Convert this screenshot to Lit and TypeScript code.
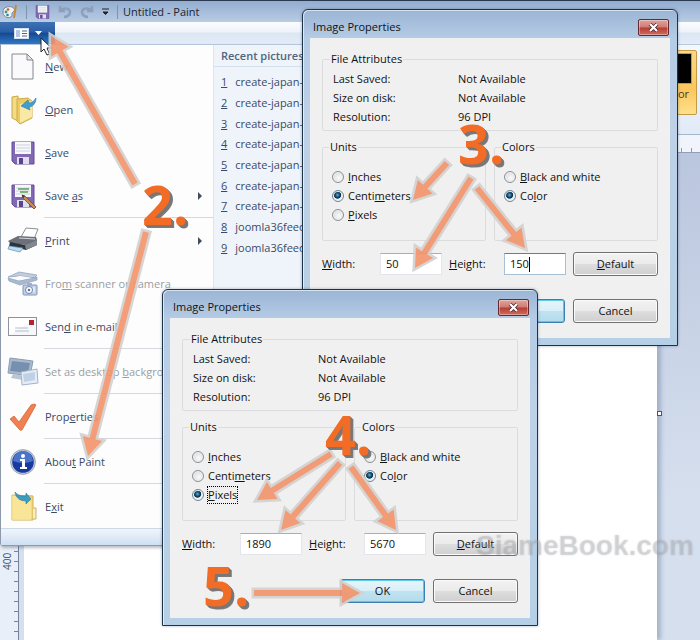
import { LitElement, html, svg, css, nothing } from "lit";
import { customElement, property } from "lit/decorators.js";
import { classMap } from "lit/directives/class-map.js";

/** Renders a label whose access key is marked by a leading ampersand. */
const accessKey = (label: string) => {
  const at = label.indexOf("&");
  if (at < 0) return html`${label}`;
  return html`${label.slice(0, at)}<u>${label[at + 1]}</u>${label.slice(at + 2)}`;
};

const floppy = svg`
  <path d="M1 1H23V23H4L1 20Z" fill="#8369b4" stroke="#634d98" />
  <rect x="4" y="1" width="16" height="12" fill="#f7f8fb" />
  <path d="M5 4H19M5 7H19M5 10H19" stroke="#ccd2dc" />
  <rect x="6" y="16" width="12" height="7" fill="#dfe1ea" />
  <rect x="8" y="17" width="4" height="6" fill="#5a4390" />`;

const icons: Record<string, { height: number; art: unknown; wide?: boolean }> = {
  new: {
    height: 27,
    art: svg`
      <path d="M1 1H16L22 7V26H1Z" fill="#fafafc" stroke="#85888f" />
      <path d="M16 1V7H22Z" fill="#e6e8ec" stroke="#85888f" />`,
  },
  open: {
    height: 28,
    art: svg`
      <path d="M1 1L7 0V25L1 22Z" fill="#f3dc85" stroke="#c9a548" />
      <path d="M6 3L17 2L21 5V22L9 28L6 25Z" fill="#eccb62" stroke="#d0aa45" />
      <path d="M9 8V27L21 21V5Z" fill="#f9e9a6" />
      <path d="M25 2C25 8 21 11 18 11L19 14L10 10L17 4L18 7C21 7 23 5 25 2Z" fill="#3f9fce" stroke="#2a7aa8" stroke-width=".6" />`,
  },
  save: { height: 24, art: floppy },
  saveas: {
    height: 24,
    art: svg`${floppy}
      <path d="M7 5H18M9 8H17" stroke="#55a055" stroke-width="1.4" />
      <path d="M11 11L14 12L25 23L23 25L12 14Z" fill="#c98a52" stroke="#74492a" stroke-width=".8" />
      <path d="M11 11L14 12L12 14Z" fill="#333" />`,
  },
  print: {
    height: 25,
    wide: true,
    art: svg`
      <path d="M13 9L18 0L30 1L26 11Z" fill="#fff" stroke="#8a8f98" />
      <path d="M0 13L10 8L28 9L29 12L18 17L2 15Z" fill="#6b7079" />
      <path d="M2 14L17 17L29 12V17L18 22L1 18Z" fill="#2f343c" />
      <path d="M17 17L29 12V17L18 22Z" fill="#81868f" />
      <path d="M1 18L15 20L12 24L0 21Z" fill="#b8dcf2" stroke="#5c8fb4" stroke-width=".7" />
      <path d="M11 10L27 11" stroke="#d5d8dd" stroke-width="1.200" />`,
  },
  scanner: {
    height: 24,
    wide: true,
    art: svg`
      <path d="M0 5L11 0L29 3L26 6L12 4Z" fill="#c1cddd" stroke="#8b9db8" stroke-width=".7" />
      <path d="M0 6L11 9L29 5V8L12 13L1 9Z" fill="#a9bad0" stroke="#8b9db8" stroke-width=".7" />
      <path d="M4 6L12 4L24 6L12 8Z" fill="#fafcff" />
      <rect x="15" y="13" width="14" height="10" rx="1" fill="#c3d1e6" stroke="#8296b8" />
      <rect x="19" y="11" width="5" height="3" fill="#9fb0ca" />
      <circle cx="21" cy="18" r="3.500" fill="#fff" stroke="#6e84ac" />
      <circle cx="21" cy="18" r="1.300" fill="#5b73a1" />
      <path d="M26 15V20" stroke="#fff" />`,
  },
  mail: {
    height: 19,
    wide: true,
    art: svg`
      <rect x=".5" y=".5" width="28" height="18" fill="#fff" stroke="#8d929b" />
      <path d="M1 18L28 1V18Z" fill="#f5f7fa" />
      <rect x="21" y="3" width="5" height="5" fill="#b1242c" />
      <path d="M7 11H20M7 14H21" stroke="#b7becb" />`,
  },
  desktop: {
    height: 27,
    wide: true,
    art: svg`
      <path d="M2 0L25 3L22 18L0 15Z" fill="#aab9cd" stroke="#8a9cb6" />
      <path d="M4 3L22 5L20 15L2 13Z" fill="#7890b0" />
      <path d="M5 16L17 18L15 22L3 20Z" fill="#b9c6d6" />
      <path d="M13 14L29 11L30 25L14 27Z" fill="#e4ecf5" stroke="#a4b4cb" />
      <path d="M15 16L27 14V22L16 24Z" fill="#c1d1e5" />`,
  },
  check: {
    height: 28,
    art: svg`
      <path d="M-1 16L3 13L8 19L20 2Q24 0 25 2L11 27Q9 28 8 26Z" fill="#f08050" stroke="#cf5c33" stroke-width=".7" />`,
  },
  about: {
    height: 26,
    art: svg`
      <circle cx="12" cy="13" r="12.400" fill="#c5cbd6" stroke="#8d96a6" stroke-width=".8" />
      <circle cx="12" cy="13" r="10.800" fill="#173a9e" />
      <path d="M2 12A10 10 0 0 1 22 12Q12 16 2 12Z" fill="#4a74cc" />
      <circle cx="12" cy="7" r="2" fill="#fff" />
      <path d="M9 10H14V18H16V20H9V18H11V12H9Z" fill="#fff" />`,
  },
  exit: {
    height: 29,
    art: svg`
      <path d="M1 3L22 4V28H1Z" fill="#f3da7c" stroke="#d2b052" />
      <path d="M1 3L20 10V28H1Z" fill="#fae9a2" opacity=".7" />
      <path d="M22 16H25V27H22" fill="#f8eebf" stroke="#c7b274" />
      <path d="M4 0C7 4 11 4 15 4V1L20 7L15 12V9C9 9 5 6 4 0Z" fill="#3d9cc0" stroke="#2b7898" stroke-width=".6" />`,
  },
};

interface Command {
  icon: string;
  label: string;
  disabled?: boolean;
  submenu?: boolean;
  ruled?: boolean;
}

const commands: Command[] = [
  { icon: "new", label: "&New" },
  { icon: "open", label: "&Open" },
  { icon: "save", label: "&Save" },
  { icon: "saveas", label: "Save &as", submenu: true, ruled: true },
  { icon: "print", label: "&Print", submenu: true },
  { icon: "scanner", label: "Fro&m scanner or camera", disabled: true },
  { icon: "mail", label: "Sen&d in e-mail", ruled: true },
  { icon: "desktop", label: "Set as desktop &background", disabled: true, ruled: true },
  { icon: "check", label: "Prop&erties", ruled: true },
  { icon: "about", label: "Abou&t Paint", ruled: true },
  { icon: "exit", label: "E&xit" },
];

const recent = [
  ...Array.from({ length: 7 }, () => "create-japan-"),
  "joomla36feed",
  "joomla36feed",
];

@customElement("paint-menu")
class PaintMenu extends LitElement {
  static styles = css`
    :host {
      display: flex;
      flex-direction: column;
      box-sizing: border-box;
      border: 1px solid #8e9aab;
      border-top-color: #b4c6de;
      border-radius: 0 0 3px 3px;
      background: #fdfdfe;
      color: #3a4a66;
      box-shadow: 1px 2px 3px rgba(60, 70, 90, 0.35);
    }
    .panes { display: flex; }
    .commands { width: 212px; }
    .item {
      display: flex;
      align-items: center;
      width: 100%;
      height: 43px;
      padding: 0 11px 0 6px;
      border: 0;
      background: none;
      color: inherit;
      font: inherit;
      text-align: left;
      white-space: nowrap;
    }
    .item:disabled { color: #9a9da3; }
    .icon { width: 38px; flex: none; display: flex; }
    .icon svg { display: block; margin-left: 4px; overflow: visible; }
    .wide svg { margin-left: 1px; }
    .label { flex: 1; }
    .rule { height: 1px; margin: 0 0 1px 43px; background: #d5d8dc; }
    .recent {
      flex: 1;
      border-left: 1px solid #dde4ee;
      background: #eff4fb;
      overflow: hidden;
    }
    .heading {
      margin: 0 0 5px;
      padding-left: 7px;
      height: 21px;
      line-height: 21px;
      border-bottom: 1px solid #d4dfee;
      color: #50657f;
      font-size: 11px;
      font-weight: 600;
    }
    .list {
      display: grid;
      grid-auto-rows: 1fr;
      align-items: center;
      height: 186px;
      margin: 0;
      padding: 0 0 0 7px;
      list-style: none;
    }
    .list a { display: flex; gap: 8px; color: inherit; text-decoration: none; }
    .footer {
      height: 16px;
      border-top: 1px solid #cdd8e6;
      background: linear-gradient(#f0f5fc, #cfe0f3);
    }
  `;

  render() {
    return html`
      <div class="panes">
        <div class="commands">
          ${commands.map((c) => {
            const { height, art, wide } = icons[c.icon];
            return html`
              <button class="item" ?disabled=${!!c.disabled}>
                <span class=${classMap({ icon: true, wide: !!wide })}>
                  <svg width="28" height=${height} aria-hidden="true">${art}</svg>
                </span>
                <span class="label">${accessKey(c.label)}</span>
                ${c.submenu
                  ? html`<svg width="4" height="8" aria-hidden="true"><path d="M0 0L4 4L0 8Z" fill="#444c58" /></svg>`
                  : nothing}
              </button>
              ${c.ruled ? html`<div class="rule"></div>` : nothing}
            `;
          })}
        </div>
        <div class="recent">
          <h2 class="heading">Recent pictures</h2>
          <ul class="list">
            ${recent.map((name, i) => html`<li><a href="#"><u>${i + 1}</u>${name}</a></li>`)}
          </ul>
        </div>
      </div>
      <div class="footer"></div>
    `;
  }
}

@customElement("image-properties")
class ImageProperties extends LitElement {
  @property() unit = "Pixels";
  @property() imageWidth = "";
  @property() imageHeight = "";
  @property({ type: Boolean }) focusRing = false;
  @property({ type: Boolean }) caret = false;

  static styles = css`
    :host {
      box-sizing: border-box;
      border: 1px solid #1d3347;
      border-radius: 6px 6px 0 0;
      background: linear-gradient(#9bb5d5, #b4cbe5 28px, #bdd1e8 120px, #b5d0e6);
      box-shadow: inset 1px 1px 0 rgba(255, 255, 255, 0.6), 0 0 3px rgba(30, 50, 80, 0.4);
      padding: 0 7px 7px;
      color: #111;
    }
    .title {
      display: flex;
      align-items: center;
      justify-content: space-between;
      height: 28px;
      padding-left: 3px;
    }
    .name { margin: 0; padding-top: 6px; font-size: 11px; font-weight: 400; }
    .close {
      display: grid;
      place-items: center;
      width: 31px;
      height: 17px;
      margin-top: 6px;
      margin-right: 1px;
      padding: 0;
      border: 1px solid #642a30;
      border-radius: 2px;
      background: linear-gradient(#dfa49d, #cf7b72 48%, #b53c33 52%, #cd6d60);
      box-shadow: inset 0 0 0 1px rgba(255, 255, 255, 0.35);
    }
    .client {
      min-height: 300px;
      box-sizing: border-box;
      padding: 13px 12px 14px;
      background: #f0f0f0;
    }
    fieldset {
      box-sizing: border-box;
      min-width: 0;
      margin: 0;
      padding: 2px 10px 4px;
      border: 1px solid #dadcde;
      border-radius: 2px;
    }
    legend { margin-left: -3px; padding: 0 1px; line-height: 16px; }
    .facts {
      display: grid;
      grid-template-columns: 125px 1fr;
      grid-auto-rows: 19px;
      align-items: center;
      margin: 0;
    }
    dd { margin: 0; }
    .groups { display: grid; grid-template-columns: 1fr 1fr; gap: 8px; margin-top: 8px; }
    .options { padding: 12px 9px 16px; }
    .option { display: flex; align-items: center; gap: 4px; height: 19px; }
    input[type="radio"] {
      appearance: none;
      width: 12px;
      height: 12px;
      margin: 0;
      border: 1px solid #8b8f94;
      border-radius: 50%;
      background: radial-gradient(circle at 60% 60%, #fafafa, #cfd2d5);
      box-shadow: inset 0 0 0 1px #f2f2f2;
    }
    input[type="radio"]:checked {
      border-color: #6f8796;
      background: radial-gradient(circle at 45% 40%, #58b4de 0, #14486b 28%, #0b304c 40%, #e9f2f7 50%);
    }
    .ring { outline: 1px dotted #000; }
    .sizes {
      display: grid;
      grid-template-columns: 58px 62px 62px 62px 1fr;
      align-items: center;
      margin-top: 11px;
    }
    .second { padding-left: 7px; }
    .field {
      display: flex;
      align-items: center;
      height: 22px;
      box-sizing: border-box;
      padding-left: 5px;
      border: 1px solid #e3e5ea;
      border-top-color: #abadb3;
      background: #fff;
    }
    .field input {
      width: 100%;
      min-width: 0;
      padding: 0;
      border: 0;
      outline: 0;
      background: none;
      font: inherit;
      font-size: 11px;
      color: inherit;
    }
    .field.caret { border-color: #a9bfd3; border-top-color: #5f7f9c; }
    .caret input { width: 19px; border-right: 1px solid #000; height: 15px; }
    .button {
      height: 24px;
      width: 85px;
      padding: 0;
      border: 1px solid #707070;
      border-radius: 3px;
      background: linear-gradient(#f2f2f2, #ebebeb 48%, #dddddd 52%, #cfcfcf);
      box-shadow: inset 0 0 0 1px #fbfbfb;
      color: inherit;
      font: inherit;
    }
    .sizes .button { margin-left: 7px; }
    .primary {
      border-color: #3c7fb1;
      background: linear-gradient(#e8f5fb, #d9eff8 48%, #c0e2f0 52%, #b2dcec);
      box-shadow: inset 0 0 0 1px #5cc9e8;
    }
    .actions { display: flex; justify-content: flex-end; gap: 8px; margin-top: 23px; }
  `;

  private radio(group: string, label: string, checked: boolean, ring = false) {
    return html`
      <label class="option">
        <input type="radio" name=${group} .checked=${checked} />
        <span class=${classMap({ ring })}>${accessKey(label)}</span>
      </label>`;
  }

  render() {
    const units = ["&Inches", "Centi&meters", "&Pixels"];
    return html`
      <div class="title">
        <h2 class="name">Image Properties</h2>
        <button class="close" aria-label="Close">
          <svg width="11" height="9" viewBox="0 0 11 9">
            <path d="M2 1L9 8M9 1L2 8" stroke="#4b2026" stroke-width="3.600" />
            <path d="M2 1L9 8M9 1L2 8" stroke="#fff" stroke-width="2.200" />
          </svg>
        </button>
      </div>
      <div class="client">
        <fieldset>
          <legend>File Attributes</legend>
          <dl class="facts">
            <dt>Last Saved:</dt><dd>Not Available</dd>
            <dt>Size on disk:</dt><dd>Not Available</dd>
            <dt>Resolution:</dt><dd>96 DPI</dd>
          </dl>
        </fieldset>
        <div class="groups">
          <fieldset class="options">
            <legend>Units</legend>
            ${units.map((u) => {
              const on = u.replace("&", "") === this.unit;
              return this.radio("units", u, on, on && this.focusRing);
            })}
          </fieldset>
          <fieldset class="options">
            <legend>Colors</legend>
            ${this.radio("colors", "&Black and white", false)}
            ${this.radio("colors", "Co&lor", true)}
          </fieldset>
        </div>
        <div class="sizes">
          <label for="w">${accessKey("&Width:")}</label>
          <span class="field"><input id="w" type="text" .value=${this.imageWidth} /></span>
          <label class="second" for="h">${accessKey("&Height:")}</label>
          <span class=${classMap({ field: true, caret: this.caret })}>
            <input id="h" type="text" .value=${this.imageHeight} />
          </span>
          <button class="button">${accessKey("&Default")}</button>
        </div>
        <div class="actions">
          <button class="button primary">OK</button>
          <button class="button">Cancel</button>
        </div>
      </div>
    `;
  }
}

/** Arrows of the walkthrough: tail x, tail y, tip x, tip y. */
const arrows = [
  [135, 184, 51, 36],
  [146, 232, 88, 456],
  [447, 163, 413, 200],
  [471, 178, 415, 268],
  [477, 188, 525, 248],
  [331, 454, 257, 500],
  [340, 463, 281, 530],
  [351, 467, 396, 530],
  [254, 593, 360, 593],
];

@customElement("app-root")
class AppRoot extends LitElement {
  static styles = css`
    :host {
      position: relative;
      display: flex;
      flex-direction: column;
      min-height: 100vh;
      overflow: hidden;
      background: #cdd7e9;
      font: 11px/16px "Open Sans", "Noto Sans", sans-serif;
      color: #222;
    }
    .titlebar {
      display: flex;
      align-items: center;
      height: 22px;
      box-sizing: border-box;
      padding-left: 2px;
      border-top: 1px solid #2a3850;
      background: linear-gradient(#93add0, #b9cce4);
    }
    .quick { display: flex; align-items: center; gap: 8px; }
    .tool { display: block; padding: 0; border: 0; background: none; line-height: 0; }
    .divider { width: 1px; height: 14px; background: #7d93b2; }
    .caption { margin: 0 0 0 5px; font-size: 11px; font-weight: 400; color: #1c2430; }
    .tabs {
      height: 22px;
      background: linear-gradient(#fbfcfe, #eef3fa 45%, #dde7f4 50%, #e2ebf7);
    }
    .file {
      display: flex;
      align-items: center;
      justify-content: center;
      gap: 6px;
      width: 55px;
      height: 22px;
      padding: 0;
      border: 0;
      background: linear-gradient(#3d72b4, #2a5ea6 45%, #154a93 52%, #2f78c4);
    }
    .ribbon {
      display: flex;
      justify-content: flex-end;
      height: 91px;
      box-sizing: border-box;
      padding: 5px 3px 0;
      border-top: 1px solid #b6c9e1;
      border-bottom: 1px solid #a5b6cd;
      background: linear-gradient(#f4f8fd, #e1eaf6);
    }
    .swatch {
      display: flex;
      flex-direction: column;
      align-items: flex-end;
      gap: 2px;
      width: 50px;
      height: 65px;
      padding: 2px 4px;
      border: 1px solid #c39a48;
      border-radius: 2px;
      background: linear-gradient(#fbd789, #fbc75c 60%, #ffe08c);
      color: #4b3a1e;
      font: inherit;
    }
    .chip { width: 28px; height: 29px; border: 1px solid #b39a68; background: #000; }
    .name { padding-right: 3px; }
    .ruler-top {
      height: 18px;
      border-bottom: 1px solid #8f9fb8;
      box-sizing: border-box;
      background:
        repeating-linear-gradient(90deg, transparent 0 1px, #8b9ab2 1px 2px, transparent 2px 10px) bottom / 100% 4px no-repeat,
        #f1f5fb;
    }
    .workspace {
      flex: 1;
      display: flex;
      gap: 5px;
      padding-right: 43px;
      background: linear-gradient(#bac6de, #d5dfee 70%);
    }
    .ruler {
      width: 19px;
      flex: none;
      height: 487px;
      overflow: hidden;
      box-sizing: border-box;
      border-right: 1px solid #75849c;
      background:
        repeating-linear-gradient(transparent 0 8px, #75849c 8px 9px, transparent 9px 10px) right / 4px 100% no-repeat,
        #e9eff8;
    }
    .mark {
      display: block;
      height: 100px;
      line-height: 14px;
      writing-mode: vertical-rl;
      transform: rotate(180deg);
      text-align: right;
      width: 14px;
      color: #444f60;
      font-size: 10px;
    }
    .canvas {
      position: relative;
      flex: 1;
      background: #fff;
      box-shadow: 4px 0 4px rgba(110, 130, 165, 0.45);
    }
    .handle {
      position: absolute;
      top: 258px;
      right: -5px;
      width: 3px;
      height: 3px;
      border: 1px solid #555;
      background: #fff;
    }
    paint-menu { position: absolute; top: 44px; left: 0; width: 440px; }
    image-properties { position: absolute; width: 376px; }
    .first { left: 302px; top: 9px; }
    .front { left: 162px; top: 289px; }
    .mark-up, .cursor { position: absolute; top: 0; left: 0; pointer-events: none; }
    .cursor { top: 37px; left: 40px; }
    .step {
      position: absolute;
      font: 700 54px/56px "Open Sans", sans-serif;
      color: #f26c25;
      text-shadow: 1px 1px 0 #777, 2px 2px 0 #777, 3px 3px 0 #7b7b7b;
    }
    .step2 { left: 142px; top: 176px; }
    .step3 { left: 458px; top: 115px; }
    .step4 { left: 325px; top: 406px; }
    .step5 { left: 203px; top: 557px; }
    .watermark {
      position: absolute;
      left: 476px;
      top: 530px;
      font: 700 28px/32px "Liberation Sans", Arial, sans-serif;
      color: rgba(165, 168, 174, 0.28);
      text-shadow: 0 0 2px rgba(130, 130, 135, 0.25);
    }
  `;

  private arrow([x1, y1, x2, y2]: number[]) {
    const length = Math.hypot(x2 - x1, y2 - y1);
    const angle = (Math.atan2(y2 - y1, x2 - x1) * 180) / Math.PI;
    const neck = length - 18;
    return svg`<path
      transform="translate(${x1} ${y1}) rotate(${angle})"
      d="M0 -3H${neck}V-10L${length} 0L${neck} 10V3H0Z"
      fill="#f3946a" stroke="#d3d1d0" stroke-width="5" paint-order="stroke" />`;
  }

  render() {
    return html`
      <header class="titlebar">
        <div class="quick">
          <svg width="16" height="16" viewBox="0 0 16 16" aria-hidden="true">
            <path d="M1 8C1 3 6 2 10 3C13 4 13 7 11 8C9 9 11 11 9 13C5 15 1 12 1 8Z" fill="#eef1f4" stroke="#76889c" />
            <circle cx="4" cy="8" r="1.400" fill="#3f9c54" /><circle cx="6" cy="5.500" r="1.300" fill="#d0573a" />
            <circle cx="5.500" cy="11" r="1.300" fill="#3d76c2" /><path d="M14 1L12 14" stroke="#c68a3b" stroke-width="2" />
          </svg>
          <span class="divider"></span>
          <button class="tool" aria-label="Save"><svg width="15" height="14" viewBox="0 0 24 24">${floppy}</svg></button>
          <button class="tool" aria-label="Undo"><svg width="14" height="14" viewBox="0 0 14 14">
            <path d="M2 1V6H7M2 6C5 2 12 3 12 7C12 10 9 12 6 12" fill="none" stroke="#8da0bb" stroke-width="2.600" /></svg></button>
          <button class="tool" aria-label="Redo"><svg width="14" height="14" viewBox="0 0 14 14">
            <path d="M12 1V6H7M12 6C9 2 2 3 2 7C2 10 5 12 8 12" fill="none" stroke="#8da0bb" stroke-width="2.600" /></svg></button>
          <button class="tool" aria-label="Customize"><svg width="7" height="8" viewBox="0 0 7 8">
            <path d="M0 1H7M1 4H6L3.500 6.500Z" fill="#222" stroke="#222" /></svg></button>
          <span class="divider"></span>
        </div>
        <h1 class="caption">Untitled - Paint</h1>
      </header>
      <nav class="tabs">
        <button class="file" aria-label="Paint menu">
          <svg width="15" height="11" viewBox="0 0 15 11">
            <rect x=".5" y=".5" width="14" height="10" fill="#fff" stroke="#d5e0ef" />
            <rect x="2" y="2" width="4" height="7" fill="#b5c9e2" />
            <path d="M8 3H13M8 5.500H13M8 8H13" stroke="#47688f" />
          </svg>
          <svg width="7" height="4"><path d="M0 0H7L3.500 4Z" fill="#fff" /></svg>
        </button>
      </nav>
      <section class="ribbon">
        <button class="swatch"><span class="chip"></span><span class="name">Color</span></button>
      </section>
      <div class="ruler-top"></div>
      <main class="workspace">
        <div class="ruler">
          ${[0, 100, 200, 300, 400].map((n) => html`<span class="mark">${n}</span>`)}
        </div>
        <div class="canvas"><span class="handle"></span></div>
      </main>

      <paint-menu></paint-menu>
      <image-properties class="first" unit="Centimeters" .imageWidth=${"50"} .imageHeight=${"150"} .caret=${true}></image-properties>
      <image-properties class="front" unit="Pixels" .imageWidth=${"1890"} .imageHeight=${"5670"} .focusRing=${true}></image-properties>

      <svg class="cursor" width="13" height="20" viewBox="0 0 13 20" aria-hidden="true">
        <path d="M1 1V15L4 12L7 18L9.500 17L7 11H11.500Z" fill="#fff" stroke="#222" />
      </svg>
      <span class="watermark">SiameBook.com</span>
      <svg class="mark-up" width="700" height="640" aria-hidden="true" opacity=".9">
        ${arrows.map((a) => this.arrow(a))}
      </svg>
      ${[2, 3, 4, 5].map((n) => html`<span class="step step${n}">${n}.</span>`)}
    `;
  }
}
